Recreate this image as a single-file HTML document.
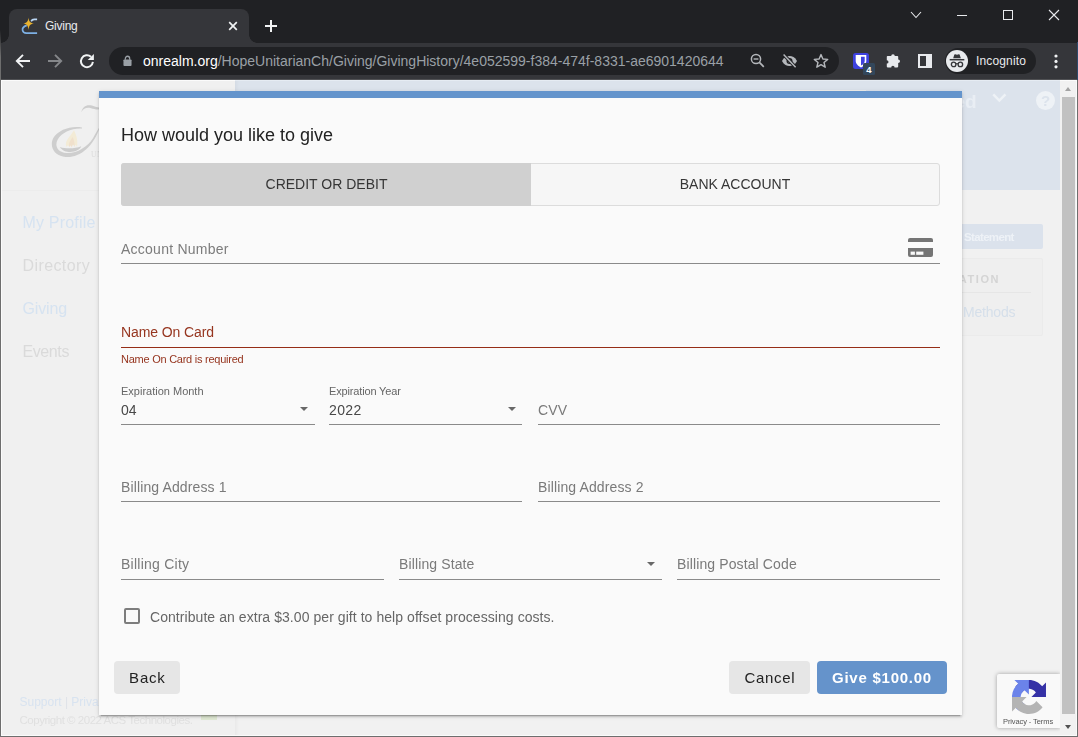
<!DOCTYPE html>
<html lang="en">
<head>
<meta charset="utf-8">
<title>Giving</title>
<style>
*{box-sizing:border-box;margin:0;padding:0}
html,body{width:1078px;height:737px;overflow:hidden;background:#202124;font-family:"Liberation Sans",sans-serif;}
.abs{position:absolute}
#win{position:absolute;left:0;top:0;width:1078px;height:737px;overflow:hidden;background:#202124}
/* chrome */
#titlebar{position:absolute;left:0;top:0;width:1078px;height:43px;background:#202124}
#tab{position:absolute;left:9px;top:9px;width:240px;height:34px;background:#35363a;border-radius:8px 8px 0 0}
#tab:before,#tab:after{content:"";position:absolute;bottom:0;width:8px;height:8px;background:radial-gradient(circle at 0 0,transparent 7.5px,#35363a 8px)}
#tab:before{left:-8px}
#tab:after{right:-8px;background:radial-gradient(circle at 100% 0,transparent 7.5px,#35363a 8px)}
#tabtitle{position:absolute;left:36px;top:10px;font-size:12px;line-height:14px;color:#e8eaed;letter-spacing:-0.25px}
#toolbar{position:absolute;left:0;top:43px;width:1078px;height:37px;background:#35363a}
#tbin{position:absolute;left:0;top:-1px;width:1078px;height:38px}
#omni{position:absolute;left:109px;top:5px;width:730px;height:28px;border-radius:14px;background:#202124}
#url{position:absolute;left:34px;top:6px;font-size:14px;line-height:16px;color:#9aa0a6;white-space:nowrap}
#url b{font-weight:normal;color:#fff}
#incog{position:absolute;left:945px;top:6px;width:91px;height:26px;border-radius:13px;background:#202124}
#incog span{position:absolute;left:31px;top:6px;font-size:12px;line-height:14px;color:#e8eaed;letter-spacing:0.15px}
/* page */
#page{will-change:transform;position:absolute;left:1px;top:80px;width:1059px;height:656px;background:#f1f1f1;overflow:hidden}
#side{position:absolute;left:0;top:0;width:234px;height:656px;background:#f0f0f0}
#sidesep{position:absolute;z-index:1;left:234px;top:0;width:4px;height:656px;background:linear-gradient(90deg,rgba(0,0,0,.035),rgba(0,0,0,0))}
#hdr{position:absolute;left:234px;top:0;width:825px;height:110px;background:#dce3ec}
.nav{position:absolute;left:21.5px;font-size:16px;line-height:20px;white-space:nowrap}
#scroll{position:absolute;left:1060px;top:80px;width:17px;height:656px;background:#f1f1f1}
#thumb{position:absolute;left:2px;top:17px;width:13px;height:617px;background:#c1c1c1}
/* modal */
#modal{z-index:2;position:absolute;left:98px;top:11px;width:863px;height:624px;background:#fafafa;box-shadow:0 2px 2px 0 rgba(0,0,0,.14),0 3px 1px -2px rgba(0,0,0,.2),0 1px 5px 0 rgba(0,0,0,.12)}
#mbar{position:absolute;left:0;top:0;width:863px;height:7px;background:#6494cc}
#mtitle{position:absolute;left:22px;top:33px;font-size:18px;line-height:22px;color:#222;white-space:nowrap}
#tabs{position:absolute;left:22px;top:72px;width:819px;height:43px;border:1px solid #dcdcdc;border-radius:3px;background:#f6f6f6}
#tab1{position:absolute;left:-1px;top:-1px;width:410px;height:43px;background:#d0d0d0;border-radius:3px 0 0 3px}
.tl{position:absolute;top:12px;font-size:14px;line-height:16px;color:#363636;white-space:nowrap;text-align:center}
.line{position:absolute;height:1px;background:#8a8a8a}
.ph{position:absolute;font-size:14px;line-height:16px;color:#7a7a7a;white-space:nowrap;letter-spacing:.12px}
.lbl{position:absolute;font-size:11px;line-height:13px;color:#666;white-space:nowrap}
.val{position:absolute;font-size:14px;line-height:16px;color:#484848;white-space:nowrap}
.arr{position:absolute;width:0;height:0;border-left:4.5px solid transparent;border-right:4.5px solid transparent;border-top:4.5px solid #686868}
.btn{position:absolute;top:570px;height:33px;border-radius:4px;background:#e6e6e6;color:#222;font-size:15px;line-height:33px;text-align:center;letter-spacing:1.2px;white-space:nowrap}
</style>
</head>
<body>
<div id="win">
  <div id="titlebar">
    <div id="tab">
      <svg class="abs" style="left:12px;top:8px;overflow:visible" width="18" height="18" viewBox="0 -1 18 18">
        <path d="M16.1 1.4 H13.4 C11.6 1.4 10.6 2.2 10.1 3.4" fill="none" stroke="#bad6f3" stroke-width="1.6"/>
        <path d="M5.8 7.4 C2.6 8.4 1.2 10.6 1.6 12.4 C2 14.2 3.4 15.1 5.2 15.1 H16.1" fill="none" stroke="#7db0e4" stroke-width="1.7"/>
        <path d="M7.5 -0.6 C7.9 3 8.6 4.6 12.9 5.4 C8.6 6.2 7.9 7.8 7.5 12 C7.1 7.8 6.4 6.2 2.3 5.4 C6.4 4.6 7.1 3 7.5 -0.6 Z" fill="#e9b32f"/>
      </svg>
      <div id="tabtitle">Giving</div>
      <svg class="abs" style="left:219px;top:12px" width="10" height="10" viewBox="0 0 10 10"><path d="M1.2 1.2 L8.8 8.8 M8.8 1.2 L1.2 8.8" stroke="#f1f3f4" stroke-width="1.7" fill="none"/></svg>
    </div>
    <svg class="abs" style="left:265px;top:20px" width="12" height="12" viewBox="0 0 12 12"><path d="M6 0 V12 M0 6 H12" stroke="#f1f3f4" stroke-width="2" fill="none"/></svg>
    <!-- window controls -->
    <svg class="abs" style="left:910px;top:10px" width="12" height="10" viewBox="0 0 12 10"><path d="M1 2 L6 7.5 L11 2" stroke="#e8eaed" stroke-width="1.1" fill="none"/></svg>
    <div class="abs" style="left:957px;top:15px;width:10px;height:1px;background:#e8eaed"></div>
    <div class="abs" style="left:1003px;top:10px;width:10px;height:10px;border:1px solid #e8eaed"></div>
    <svg class="abs" style="left:1048px;top:9px" width="12" height="12" viewBox="0 0 12 12"><path d="M1 1 L11 11 M11 1 L1 11" stroke="#e8eaed" stroke-width="1.1" fill="none"/></svg>
  </div>
  <div id="toolbar"><div id="tbin">
    <!-- back -->
    <svg class="abs" style="left:15px;top:11px" width="16" height="16" viewBox="0 0 16 16"><path d="M15 8 H2.5 M8 1.8 L1.8 8 L8 14.2" stroke="#f1f3f4" stroke-width="1.9" fill="none"/></svg>
    <svg class="abs" style="left:47px;top:11px" width="16" height="16" viewBox="0 0 16 16"><path d="M1 8 H13.5 M8 1.8 L14.2 8 L8 14.2" stroke="#85878a" stroke-width="1.9" fill="none"/></svg>
    <svg class="abs" style="left:79px;top:11px" width="16" height="16" viewBox="0 0 16 16"><path d="M13.9 8.9 A6 6 0 1 1 12 3.8" stroke="#f1f3f4" stroke-width="2" fill="none"/><path d="M14.9 0.9 V7.1 H8.7 Z" fill="#f1f3f4"/></svg>
    <div id="omni">
      <svg class="abs" style="left:13.7px;top:7.7px" width="9" height="11.5" viewBox="0 0 10 12"><rect x="0.5" y="4.5" width="9" height="7.2" rx="1" fill="#9aa0a6"/><path d="M2.6 5 V3.4 A2.4 2.4 0 0 1 7.4 3.4 V5" stroke="#9aa0a6" stroke-width="1.4" fill="none"/></svg>
      <div id="url"><b>onrealm.org</b>/HopeUnitarianCh/Giving/GivingHistory/4e052599-f384-474f-8331-ae6901420644</div>
      <!-- zoom out -->
      <svg class="abs" style="left:640.7px;top:6.3px" width="15" height="15" viewBox="0 0 15 15"><circle cx="6" cy="6" r="4.6" stroke="#b4b7bb" stroke-width="1.5" fill="none"/><path d="M9.4 9.4 L13.8 13.8" stroke="#b4b7bb" stroke-width="1.7"/><path d="M3.6 6 H8.4" stroke="#b4b7bb" stroke-width="1.4"/></svg>
      <!-- eye off -->
      <svg class="abs" style="left:671.7px;top:6px" width="17" height="16" viewBox="0 0 17 16"><path d="M1 8 C3 4.2 5.8 3 8.5 3 C11.2 3 14 4.2 16 8 C14 11.8 11.2 13 8.5 13 C5.8 13 3 11.8 1 8 Z" fill="#b4b7bb"/><circle cx="8.5" cy="8" r="3" fill="#202124"/><circle cx="8.5" cy="8" r="1.6" fill="#b4b7bb"/><path d="M2.2 1.2 L15 14.6" stroke="#202124" stroke-width="3.4"/><path d="M2.6 1.6 L14.6 14.2" stroke="#b4b7bb" stroke-width="1.5"/></svg>
      <!-- star -->
      <svg class="abs" style="left:704px;top:6px" width="16" height="16" viewBox="0 0 16 16"><path d="M8 1.6 L9.9 6 L14.7 6.4 L11 9.5 L12.2 14.2 L8 11.7 L3.8 14.2 L5 9.5 L1.3 6.4 L6.1 6 Z" stroke="#b4b7bb" stroke-width="1.4" fill="none" stroke-linejoin="round"/></svg>
    </div>
    <!-- bitwarden -->
    <div class="abs" style="left:853px;top:11px;width:16px;height:16px;border-radius:2.5px;background:#3d41de"></div>
    <svg class="abs" style="left:853px;top:11px" width="16" height="16" viewBox="0 0 16 16"><path d="M2.7 2 H13.3 V8 C13.3 11 10.6 13.2 8 14.4 C5.4 13.2 2.7 11 2.7 8 Z" fill="#fff"/><path d="M8 3.7 H11.7 V8 C11.7 10 10 11.6 8 12.6 Z" fill="#3d41de"/></svg>
    <div class="abs" style="left:863px;top:21px;width:12px;height:12px;border-radius:1.5px;background:#33475b;color:#fff;font-size:9.5px;font-weight:bold;line-height:13px;text-align:center">4</div>
    <!-- puzzle -->
    <svg class="abs" style="left:885px;top:11px" width="16" height="16" viewBox="0 0 16 16"><path d="M6.2 3 A1.8 1.8 0 0 1 9.8 3 H12.4 A0.8 0.8 0 0 1 13.2 3.8 V6.4 A1.8 1.8 0 0 1 13.2 10 V13.6 A0.8 0.8 0 0 1 12.4 14.4 H9.6 A1.7 1.7 0 0 0 6.2 14.4 H2.6 A0.8 0.8 0 0 1 1.8 13.6 V10.6 A1.7 1.7 0 0 0 1.8 7.2 V3.8 A0.8 0.8 0 0 1 2.6 3 Z" fill="#e8eaed"/></svg>
    <!-- side panel -->
    <div class="abs" style="left:918px;top:12px;width:14px;height:14px;border:2px solid #e8eaed;border-right-width:6px"></div>
    <div id="incog">
      <div class="abs" style="left:1px;top:2px;width:22px;height:22px;border-radius:11px;background:#e8eaed"></div>
      <svg class="abs" style="left:3px;top:3.6px" width="18" height="18" viewBox="0 0 16 16"><path d="M4.6 5.6 L5.6 2.4 Q5.8 1.8 6.4 2 L8 2.5 L9.6 2 Q10.2 1.8 10.4 2.4 L11.4 5.6 Z" fill="#35363a"/><rect x="1.5" y="6.2" width="13" height="1.3" fill="#35363a"/><circle cx="5" cy="11" r="2" stroke="#35363a" stroke-width="1.2" fill="none"/><circle cx="11" cy="11" r="2" stroke="#35363a" stroke-width="1.2" fill="none"/><path d="M7 10.6 Q8 10 9 10.6" stroke="#35363a" stroke-width="1.1" fill="none"/></svg>
      <span>Incognito</span>
    </div>
    <svg class="abs" style="left:1053.6px;top:12px" width="4" height="15" viewBox="0 0 4 15"><circle cx="2" cy="2" r="1.6" fill="#f1f3f4"/><circle cx="2" cy="7.4" r="1.6" fill="#f1f3f4"/><circle cx="2" cy="12.8" r="1.6" fill="#f1f3f4"/></svg>
  </div></div>

  <div id="page">
    <div id="side"></div>
    <div id="sidesep"></div>
    <div id="hdr"></div>
    <!-- sidebar content (dimmed) -->
    <svg class="abs" style="left:49px;top:20px" width="60" height="62" viewBox="50 100 60 62">
      <path d="M81.4 112 C82.4 107 86 104.6 90.5 105.3 C94.5 106 97.5 108 104 108.3 C98.5 110.4 94.5 109.2 91 108.2 C87 107.2 83.6 108 81.4 112 Z" fill="#cdcdcd"/>
      <path d="M82 127.4 C71 125.4 58.5 129.6 53.6 137.6 C49.2 145 53 155.2 64 156.8 C78.5 158.8 93 148 100 127 C98.4 128 96.4 132.4 93.4 137.4 C87.4 147.4 76 153.6 66.5 152.9 C57.5 152.2 54.4 145.8 57.6 139.8 C61.6 132.4 72 128 82 128.6 Z" fill="#cecece"/>
      <path d="M59.8 146.9 C66 149 75 148.8 81.2 146.3 C79.5 152.4 65 155 59.8 146.9 Z" fill="#cccccc"/>
      <path d="M74 130.2 C75.6 134 78.4 139 77 147 C76 144.6 75 144.2 74.4 147.2 C73.6 143.6 72.6 143.4 71.8 147.4 C71 144.8 70 144.8 69.4 147.2 C68.4 145 67.4 145.2 66.6 147 C63.8 141.6 69.6 137.4 74 130.2 Z" fill="#f3ebd6"/>
      <path d="M72.6 137 C74 140 75 143 74.4 147.2 C73.6 143.6 72.6 143.4 71.8 147.4 C71 144.8 70 144.8 69.4 147.2 C68 143 70.6 140.4 72.6 137 Z" fill="#f0e0cc"/>
      <text x="91" y="157.4" font-family="Liberation Serif,serif" font-size="7.5" fill="#dcdcdc" letter-spacing=".6">UNITARIAN</text>
    </svg>
    <div class="abs" style="left:0;top:110px;width:234px;height:1px;background:#ececec"></div>
    <div class="nav" style="top:132.5px;color:#d6e3f1;letter-spacing:.2px">My Profile</div>
    <div class="nav" style="top:175.5px;color:#dadada;letter-spacing:.4px">Directory</div>
    <div class="nav" style="top:218.5px;color:#d6e3f1;letter-spacing:-.13px">Giving</div>
    <div class="nav" style="top:261.5px;color:#dadada;letter-spacing:-.4px">Events</div>
    <div class="abs" style="left:18.5px;top:615px;font-size:12px;line-height:14px;color:#d8e3f0;white-space:nowrap">Support <span style="color:#dfe3e8">|</span> Privacy</div>
    <div class="abs" style="left:18.5px;top:633px;font-size:11.5px;line-height:14px;color:#e0e0e0;white-space:nowrap;letter-spacing:-.48px">Copyright © 2022 ACS Technologies.</div>
    <div class="abs" style="left:200px;top:632px;width:16px;height:8px;background:#dfe8d3"></div>
    <!-- header content (dimmed) -->
    <div class="abs" style="left:719px;top:9.5px;width:146px;height:12px;background:#f0efec"></div>
    <div class="abs" style="left:953.5px;top:9px;font-size:19px;line-height:26px;font-weight:bold;color:#e9eef4;white-space:nowrap">ed</div>
    <svg class="abs" style="left:991.3px;top:13px" width="14.7" height="10.5" viewBox="0 0 14 10"><path d="M1.2 1.4 L7 7.2 L12.8 1.4" stroke="#eef2f6" stroke-width="2.4" fill="none"/></svg>
    <div class="abs" style="left:1035px;top:11px;width:19px;height:19px;border-radius:10px;background:#eef2f6;color:#dce3ec;font-size:15px;font-weight:bold;line-height:19px;text-align:center">?</div>
    <!-- statement + box -->
    <div class="abs" style="left:900px;top:144px;width:142px;height:25px;background:#dbe2ec;border-radius:2px"></div>
    <div class="abs" style="left:963px;top:149.5px;font-size:11.5px;line-height:14px;font-weight:bold;color:#eef2f7;white-space:nowrap;letter-spacing:-.65px">Statement</div>
    <div class="abs" style="left:900px;top:178px;width:142px;height:78px;background:#efefef;border:1px solid #ebebeb;border-radius:2px"></div>
    <div class="abs" style="left:947px;top:193px;font-size:11px;line-height:13px;font-weight:bold;color:#d4d4d4;white-space:nowrap;letter-spacing:1.6px">MATION</div>
    <div class="abs" style="left:900px;top:212px;width:130px;height:1px;background:#e6e6e6"></div>
    <div class="abs" style="left:962px;top:224px;font-size:14px;line-height:16px;color:#d5dfea;white-space:nowrap;letter-spacing:-.2px">Methods</div>
    <div id="modal">
      <div id="mbar"></div>
      <div id="mtitle">How would you like to give</div>
      <div id="tabs">
        <div id="tab1"></div>
        <div class="tl" style="left:0;width:409px">CREDIT OR DEBIT</div>
        <div class="tl" style="left:409px;width:408px">BANK ACCOUNT</div>
      </div>
      <!-- account number -->
      <div class="ph" style="left:22px;top:150px;letter-spacing:.25px;color:#7c7c7c">Account Number</div>
      <svg class="abs" style="left:809px;top:147px" width="25" height="19" viewBox="0 0 25 19"><path d="M0 2 A2 2 0 0 1 2 0 H23 A2 2 0 0 1 25 2 V4 H0 Z" fill="#757575"/><path d="M0 10 H25 V17 A2 2 0 0 1 23 19 H2 A2 2 0 0 1 0 17 Z" fill="#757575"/><rect x="2.6" y="13.6" width="4.3" height="3.2" fill="#fafafa"/><rect x="8.2" y="13.6" width="7.2" height="3.2" fill="#fafafa"/></svg>
      <div class="line" style="left:22px;top:172px;width:819px"></div>
      <!-- name on card -->
      <div class="ph" style="left:22px;top:233px;color:#96351f;letter-spacing:-.1px">Name On Card</div>
      <div class="line" style="left:22px;top:256px;width:819px;height:1px;background:#952d16"></div>
      <div class="lbl" style="left:22px;top:261.5px;font-size:11px;letter-spacing:-.25px;color:#96351f">Name On Card is required</div>
      <!-- expiry -->
      <div class="lbl" style="left:22px;top:294px">Expiration Month</div>
      <div class="val" style="left:22px;top:311px">04</div>
      <div class="arr" style="left:201px;top:316px"></div>
      <div class="line" style="left:22px;top:333px;width:194px"></div>
      <div class="lbl" style="left:230px;top:294px;letter-spacing:-.15px">Expiration Year</div>
      <div class="val" style="left:230px;top:311px;letter-spacing:.4px">2022</div>
      <div class="arr" style="left:409px;top:316px"></div>
      <div class="line" style="left:230px;top:333px;width:193px"></div>
      <div class="ph" style="left:439px;top:311px">CVV</div>
      <div class="line" style="left:439px;top:333px;width:402px"></div>
      <!-- billing address -->
      <div class="ph" style="left:22px;top:388px">Billing Address 1</div>
      <div class="line" style="left:22px;top:410px;width:401px"></div>
      <div class="ph" style="left:439px;top:388px">Billing Address 2</div>
      <div class="line" style="left:439px;top:410px;width:402px"></div>
      <!-- city/state/zip -->
      <div class="ph" style="left:22px;top:465px;letter-spacing:.25px">Billing City</div>
      <div class="line" style="left:22px;top:488px;width:263px"></div>
      <div class="ph" style="left:300px;top:465px">Billing State</div>
      <div class="arr" style="left:548px;top:471px"></div>
      <div class="line" style="left:300px;top:488px;width:263px"></div>
      <div class="ph" style="left:578px;top:465px">Billing Postal Code</div>
      <div class="line" style="left:578px;top:488px;width:263px"></div>
      <!-- checkbox -->
      <div class="abs" style="left:25px;top:517px;width:16px;height:16px;border:2px solid #7d7d7d;border-radius:2px"></div>
      <div class="ph" style="left:51px;top:518px;color:#666;letter-spacing:.06px">Contribute an extra $3.00 per gift to help offset processing costs.</div>
      <!-- buttons -->
      <div class="btn" style="left:15px;width:66px;letter-spacing:.8px;text-indent:.8px">Back</div>
      <div class="btn" style="left:630px;width:81px;letter-spacing:.7px;text-indent:.7px">Cancel</div>
      <div class="btn" style="left:718px;width:130px;background:#6593cb;color:#fff;font-weight:bold;letter-spacing:.75px">Give $100.00</div>
    </div>
  </div>
  <div class="abs" style="left:997px;top:674px;width:63px;height:54px;background:#f9f9f9;border-radius:2px 0 0 2px;box-shadow:0 0 4px rgba(0,0,0,.35)"></div>
  <svg class="abs" style="left:1012px;top:680px" width="34" height="34" viewBox="0 0 64 64">
    <path d="M64 31.96 C63.99 31.5 63.98 31.04 63.96 30.58 V4.6 L56.78 11.78 C50.9 4.59 41.96 0 31.96 0 C21.54 0 12.29 4.97 6.44 12.67 L18.21 24.56 C19.36 22.43 21 20.6 22.98 19.21 C25.03 17.6 27.94 16.29 31.96 16.29 C32.44 16.29 32.82 16.35 33.09 16.45 C38.07 16.85 42.39 19.6 44.93 23.59 L36.6 31.92 C47.15 31.88 59.07 31.85 64 31.96" fill="#3531a6"/>
    <path d="M31.86 0 C31.4 0 30.94 0.02 30.48 0.04 H4.5 L11.68 7.22 C4.49 13.1 -0.1 22.04 -0.1 32.04 C-0.1 42.46 4.87 51.71 12.57 57.56 L24.46 45.79 C22.33 44.64 20.5 43 19.11 41.02 C17.5 38.97 16.19 36.06 16.19 32.04 C16.19 31.56 16.25 31.18 16.35 30.91 C16.75 25.93 19.5 21.61 23.49 19.07 L31.82 27.4 C31.78 16.85 31.75 4.93 31.86 0" fill="#6b83ea"/>
    <path d="M0 32.04 C0 32.5 0.02 32.96 0.04 33.42 V59.4 L7.22 52.22 C13.1 59.41 22.04 64 32.04 64 C42.46 64 51.71 59.03 57.56 51.33 L45.79 39.44 C44.64 41.57 43 43.4 41.02 44.79 C38.97 46.4 36.06 47.71 32.04 47.71 C31.56 47.71 31.18 47.65 30.91 47.55 C25.93 47.15 21.61 44.4 19.07 40.41 L27.4 32.08 C16.85 32.12 4.93 32.15 0 32.04" fill="#b4b4b4"/>
  </svg>
  <div class="abs" style="left:1003px;top:717px;font-size:7.5px;line-height:9px;color:#555;white-space:nowrap;letter-spacing:-.1px">Privacy - Terms</div>
  <div id="scroll"><div id="thumb"></div>
    <div class="abs" style="left:5px;top:7px;width:0;height:0;border-left:3.5px solid transparent;border-right:3.5px solid transparent;border-bottom:4px solid #a3a3a3"></div>
    <div class="abs" style="left:5px;top:645px;width:0;height:0;border-left:3.5px solid transparent;border-right:3.5px solid transparent;border-top:4px solid #505050"></div>
  </div>
  <div class="abs" style="left:0;top:79px;width:1078px;height:1px;background:#505154"></div>
  <div class="abs" style="left:1px;top:80px;width:234px;height:1px;background:#fbfbfb"></div>
  <div class="abs" style="left:235px;top:80px;width:825px;height:1px;background:#e6ecf3"></div>
  <div class="abs" style="left:1060px;top:80px;width:17px;height:1px;background:#fbfbfb"></div>
  <div class="abs" style="left:1px;top:80px;width:1px;height:656px;background:#fbfbfb"></div>
  <div class="abs" style="left:1px;top:735px;width:1076px;height:1px;background:#fbfbfb"></div>
  <div class="abs" style="left:1076px;top:80px;width:1px;height:656px;background:#fafafa"></div>
  <div class="abs" style="left:0;top:30px;width:1px;height:27px;background:linear-gradient(#202124,#6e6e6e)"></div>
  <div class="abs" style="left:0;top:57px;width:1px;height:680px;background:#6e6e6e"></div>
  <div class="abs" style="left:1077px;top:42px;width:1px;height:38px;background:#2e4a6b"></div>
  <div class="abs" style="left:1077px;top:80px;width:1px;height:657px;background:#6e6e6e"></div>
  <div class="abs" style="left:0;top:736px;width:1078px;height:1px;background:#6e6e6e"></div>
</div>
</body>
</html>
